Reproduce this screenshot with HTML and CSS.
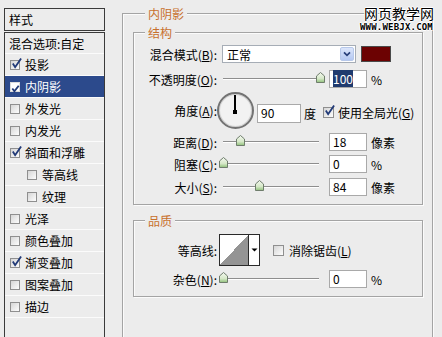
FILE: index.html
```html
<!DOCTYPE html>
<html lang="zh-CN">
<head>
  <meta charset="UTF-8">
  <title>图层样式 - 内阴影</title>
  <link rel="stylesheet" href="styles.css">
</head>
<body>
  <svg class="defs" width="0" height="0">
    <defs>
      <linearGradient id="thumbFill" x1="0" y1="0" x2="0" y2="1">
        <stop offset="0" stop-color="#f4f8f0"/>
        <stop offset="0.6" stop-color="#d6e8c8"/>
        <stop offset="1" stop-color="#8fc07a"/>
      </linearGradient>
    </defs>
  </svg>

  <div class="dialog">
    <aside class="sidebar">
      <div class="side-head">样式</div>
      <ul class="side-list">
        <li class="item">混合选项:自定</li>
        <li class="item"><span class="cb"><svg class="tick" viewBox="0 0 12 12"><path d="M2 6 L4.5 10 L11 0.5"/></svg></span>投影</li>
        <li class="item active"><span class="cb"><svg class="tick" viewBox="0 0 12 12"><path d="M2.5 6 L4.8 9 L9.5 3"/></svg></span>内阴影</li>
        <li class="item"><span class="cb"></span>外发光</li>
        <li class="item"><span class="cb"></span>内发光</li>
        <li class="item"><span class="cb"><svg class="tick" viewBox="0 0 12 12"><path d="M2 6 L4.5 10 L11 0.5"/></svg></span>斜面和浮雕</li>
        <li class="item sub"><span class="cb"></span>等高线</li>
        <li class="item sub"><span class="cb"></span>纹理</li>
        <li class="item"><span class="cb"></span>光泽</li>
        <li class="item"><span class="cb"></span>颜色叠加</li>
        <li class="item"><span class="cb"><svg class="tick" viewBox="0 0 12 12"><path d="M2 6 L4.5 10 L11 0.5"/></svg></span>渐变叠加</li>
        <li class="item"><span class="cb"></span>图案叠加</li>
        <li class="item"><span class="cb"></span>描边</li>
      </ul>
    </aside>

    <main class="panel">
      <section class="group outer">
        <div class="group-title">内阴影</div>

        <section class="group struct">
          <div class="group-title">结构</div>

          <div class="row r-mode">
            <span class="lbl">混合模式(<u>B</u>):</span>
            <div class="select">
              <span>正常</span>
              <span class="drop"><svg viewBox="0 0 14 14"><path d="M3.5 5 L7 8.5 L10.5 5"/></svg></span>
            </div>
            <span class="swatch"></span>
          </div>

          <div class="row r-opacity">
            <span class="lbl">不透明度(<u>O</u>):</span>
            <div class="slider"><svg class="thumb" style="left: 93px" viewBox="0 0 9 11"><path d="M0.5 4 L4.5 0.5 L8.5 4 V10.5 H0.5 Z"/></svg></div>
            <span class="num"><span class="sel">100</span></span>
            <span class="unit">%</span>
          </div>

          <div class="row r-angle">
            <span class="lbl">角度(<u>A</u>):</span>
            <div class="dial"><span class="hand"></span></div>
            <span class="num wide">90</span>
            <span class="unit">度</span>
            <span class="cb big"><svg class="tick" viewBox="0 0 12 12"><path d="M2 6 L4.5 10 L11 0.5"/></svg></span>
            <span>使用全局光(<u>G</u>)</span>
          </div>

          <div class="row r-distance">
            <span class="lbl">距离(<u>D</u>):</span>
            <div class="slider"><svg class="thumb" style="left: 13px" viewBox="0 0 9 11"><path d="M0.5 4 L4.5 0.5 L8.5 4 V10.5 H0.5 Z"/></svg></div>
            <span class="num">18</span>
            <span class="unit">像素</span>
          </div>

          <div class="row r-choke">
            <span class="lbl">阻塞(<u>C</u>):</span>
            <div class="slider"><svg class="thumb" style="left: -4px" viewBox="0 0 9 11"><path d="M0.5 4 L4.5 0.5 L8.5 4 V10.5 H0.5 Z"/></svg></div>
            <span class="num">0</span>
            <span class="unit">%</span>
          </div>

          <div class="row r-size">
            <span class="lbl">大小(<u>S</u>):</span>
            <div class="slider"><svg class="thumb" style="left: 32px" viewBox="0 0 9 11"><path d="M0.5 4 L4.5 0.5 L8.5 4 V10.5 H0.5 Z"/></svg></div>
            <span class="num">84</span>
            <span class="unit">像素</span>
          </div>
        </section>

        <section class="group quality">
          <div class="group-title">品质</div>

          <div class="row r-contour">
            <span class="lbl">等高线:</span>
            <div class="contour">
              <span class="curve"></span>
              <span class="curve-drop"><svg viewBox="0 0 9 6"><path d="M1.5 1.5 H7.5 L4.5 4.5 Z"/></svg></span>
            </div>
            <span class="cb big aa"></span>
            <span>消除锯齿(<u>L</u>)</span>
          </div>

          <div class="row r-noise">
            <span class="lbl">杂色(<u>N</u>):</span>
            <div class="slider"><svg class="thumb" style="left: -4px" viewBox="0 0 9 11"><path d="M0.5 4 L4.5 0.5 L8.5 4 V10.5 H0.5 Z"/></svg></div>
            <span class="num">0</span>
            <span class="unit">%</span>
          </div>
        </section>
      </section>
    </main>

    <div class="watermark">
      <div class="wm-cn">网页教学网</div>
      <div class="wm-en">WWW.WEBJX.COM</div>
    </div>
  </div>
</body>
</html>
```

FILE: styles.css
```css
* {
  box-sizing: border-box;
}

body {
  margin: 0;
  background-color: #ececec;
  font-family: "Noto Sans CJK SC", "Noto Sans", sans-serif;
  font-size: 12px;
  color: #000;
}

.defs {
  position: absolute;
}

.dialog {
  display: flex;
  height: 337px;
  overflow: hidden;
  position: relative;
}

/* left style list */
.sidebar {
  width: 101px;
  margin: 8px 0 0 4px;
  display: flex;
  flex-direction: column;
  flex: none;
}

.side-head {
  height: 23px;
  border: 1px solid #3a3a3a;
  padding-left: 4px;
  line-height: 21px;
}

.side-list {
  flex: 1;
  margin: 1px 0 0;
  padding: 0;
  list-style: none;
  border: 1px solid #3a3a3a;
  border-bottom: none;
}

.item {
  height: 22px;
  display: flex;
  align-items: center;
  padding-left: 4px;
  border-bottom: 1px solid #fbfbfb;
  white-space: nowrap;
}

.item:first-child {
  height: 21px;
}

.item.sub {
  padding-left: 21px;
}

.item.active {
  background-color: #2c4a8c;
  color: #fff;
}

.cb {
  position: relative;
  flex: none;
  width: 10px;
  height: 10px;
  margin: 0 5px 0 1px;
  border: 1px solid #8f8f8f;
  background: linear-gradient(135deg, #d6d6d6, #fdfdfd);
}

.item.active .cb {
  background: #fff;
  border-color: #dcdcdc;
}

.tick {
  position: absolute;
  left: 0;
  top: -3px;
  width: 11px;
  height: 11px;
  overflow: visible;
}

.tick path {
  fill: none;
  stroke: #213a78;
  stroke-width: 2;
}

.item.active .tick {
  top: 0;
  left: -1px;
}

/* right panel */
.panel {
  margin-left: 17px;
  width: 311px;
  padding-top: 13px;
  flex: none;
}

.group {
  border: 1px solid #a4a4a4;
  box-shadow: inset 1px 1px 0 #fbfbfb, 1px 1px 0 #fbfbfb;
}

.outer {
  height: 400px;
  padding: 0 9px 0 10px;
}

.group-title {
  width: max-content;
  margin: -8px 0 0 12px;
  padding: 0 3px;
  line-height: 15px;
  background-color: #ececec;
  color: #c8702c;
}

.struct {
  margin-top: 11px;
  padding-bottom: 8px;
}

.struct .group-title,
.quality .group-title {
  margin-left: 11px;
}

.quality {
  margin-top: 15px;
  padding-bottom: 8px;
}

.row {
  display: flex;
  align-items: center;
  height: 18px;
  margin-top: 5px;
  white-space: nowrap;
}

.r-mode { margin-top: 5px; }
.r-opacity { margin-top: 7px; }
.r-angle { margin-top: 4px; height: 36px; }
.r-choke { margin-top: 4px; }
.r-contour { margin-top: 6px; height: 32px; }
.r-noise { margin-top: 4px; }

.lbl {
  flex: none;
  width: 83px;
  margin-right: 5px;
  text-align: right;
}

.select {
  display: flex;
  align-items: center;
  justify-content: space-between;
  width: 134px;
  height: 18px;
  padding: 0 1px 0 4px;
  border: 1px solid #a6adb6;
  background-color: #fff;
}

.drop {
  width: 14px;
  height: 14px;
  border: 1px solid #b7c8ea;
  border-radius: 2px;
  background: linear-gradient(#dce6fb, #b4c8f2);
}

.drop svg {
  display: block;
  width: 12px;
  height: 12px;
}

.drop path {
  fill: none;
  stroke: #283f7a;
  stroke-width: 2;
}

.swatch {
  width: 30px;
  height: 16px;
  margin-left: 5px;
  border: 1px solid #4a4a4a;
  background-color: #6c0202;
}

.slider {
  position: relative;
  flex: none;
  width: 96px;
  height: 18px;
  margin-left: 1px;
  background:
    linear-gradient(#8e8e8e, #8e8e8e) 0 8px / 100% 1px no-repeat,
    linear-gradient(#fff, #fff) 0 9px / 100% 1px no-repeat;
}

.thumb {
  position: absolute;
  top: 2px;
  width: 9px;
  height: 11px;
}

.thumb path {
  fill: url(#thumbFill);
  stroke: #6f7d6c;
  stroke-width: 1;
}

.num {
  flex: none;
  width: 38px;
  height: 18px;
  margin-left: 10px;
  padding-left: 3px;
  border: 1px solid #a9a9a9;
  background-color: #fff;
  line-height: 16px;
}

.num.wide {
  width: 44px;
  height: 19px;
  margin-left: 3px;
  margin-top: 7px;
  margin-bottom: 1px;
}

.sel {
  background-color: #1f3a6e;
  color: #fff;
}

.unit {
  margin-left: 4px;
}

.r-angle .unit {
  margin-left: 3px;
  margin-top: 7px;
}

.dial {
  position: relative;
  flex: none;
  width: 37px;
  height: 37px;
  margin-left: -5px;
  border: 2px solid #737373;
  border-radius: 50%;
  background: radial-gradient(circle, #f2f2f2 60%, #e2e2e2);
  box-shadow: inset 0 0 0 1px #d0d0d0;
}

.hand {
  position: absolute;
  left: 15px;
  top: 1px;
  width: 2px;
  height: 17px;
  background-color: #000;
}

.hand::after {
  content: "";
  position: absolute;
  left: -1px;
  bottom: -2px;
  width: 4px;
  height: 4px;
  background-color: #000;
}

.cb.big {
  width: 11px;
  height: 11px;
  margin: 0 4px 0 7px;
}

.r-angle .cb.big {
  margin-top: 4px;
}

.r-angle > span:last-child {
  margin-top: 4px;
}

.cb.aa {
  margin-left: 13px;
  margin-right: 5px;
}

.contour {
  display: flex;
  flex: none;
  width: 41px;
  height: 32px;
  margin-left: -3px;
  border: 1px solid #2a2a2a;
  background-color: #fff;
}

.curve {
  width: 29px;
  height: 30px;
  background: linear-gradient(to top left, #949494 50%, #fff 50%);
  border-right: 1px solid #2a2a2a;
}

.curve-drop {
  flex: 1;
  display: flex;
  align-items: center;
  justify-content: center;
}

.curve-drop svg {
  width: 9px;
  height: 6px;
}

.curve-drop path {
  fill: #000;
}

/* watermark stamped over the corner */
.watermark {
  position: absolute;
  top: 4px;
  right: 9px;
  text-align: right;
  color: #000;
  text-shadow: 1px 0 #fff, -1px 0 #fff, 0 1px #fff, 0 -1px #fff;
}

.wm-cn {
  font-size: 14px;
  line-height: 18px;
  letter-spacing: 0;
  margin-right: -1px;
}

.wm-en {
  font-family: "DejaVu Sans Mono", monospace;
  font-size: 9px;
  font-weight: bold;
  line-height: 10px;
  letter-spacing: 0.2px;
}
```
